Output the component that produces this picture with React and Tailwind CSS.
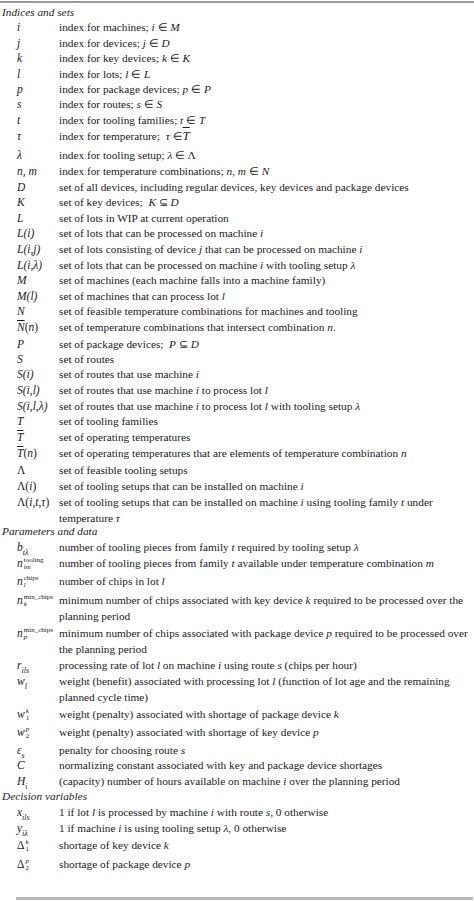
import React from "react";

const Sc = ({ sub, sup }) => (
  <span className="inline-flex flex-col align-[5px] text-[7px] leading-[7px] ml-[1px] not-italic">
    <span className="not-italic">{sup || "\u00a0"}</span>
    <span className="italic">{sub || "\u00a0"}</span>
  </span>
);

const Sub = ({ children }) => (
  <sub className="text-[8px] italic align-[-2px] leading-none">{children}</sub>
);

const Ob = ({ children }) => <span className="overline">{children}</span>;

const rows = [
  { head: "Indices and sets", h: "h-[15px]" },
  { s: <i>i</i>, d: <>index for machines; <i>i</i> ∈ <i>M</i></>, h: "h-[16px]" },
  { s: <i>j</i>, d: <>index for devices; <i>j</i> ∈ <i>D</i></>, h: "h-[15px]" },
  { s: <i>k</i>, d: <>index for key devices; <i>k</i> ∈ <i>K</i></>, h: "h-[16px]" },
  { s: <i>l</i>, d: <>index for lots; <i>l</i> ∈ <i>L</i></>, h: "h-[15px]" },
  { s: <i>p</i>, d: <>index for package devices; <i>p</i> ∈ <i>P</i></>, h: "h-[15px]" },
  { s: <i>s</i>, d: <>index for routes; <i>s</i> ∈ <i>S</i></>, h: "h-[16px]" },
  { s: <i>t</i>, d: <>index for tooling families; <i>t</i> ∈ <i>T</i></>, h: "h-[16px]" },
  { s: <i>τ</i>, d: <>index for temperature;&nbsp; <i>τ</i> ∈<i className="text-[13px]"><Ob>T</Ob></i></>, h: "h-[19px]" },
  { s: <i>λ</i>, d: <>index for tooling setup; <i>λ</i> ∈ Λ</>, h: "h-[16px]" },
  { s: <i>n, m</i>, d: <>index for temperature combinations; <i>n</i>, <i>m</i> ∈ <i>N</i></>, h: "h-[16px]" },
  { s: <i>D</i>, d: <>set of all devices, including regular devices, key devices and package devices</>, h: "h-[15px]" },
  { s: <i>K</i>, d: <>set of key devices;&nbsp; <i>K</i> ⊆ <i>D</i></>, h: "h-[16px]" },
  { s: <i>L</i>, d: <>set of lots in WIP at current operation</>, h: "h-[15px]" },
  { s: <i>L(i)</i>, d: <>set of lots that can be processed on machine <i>i</i></>, h: "h-[16px]" },
  { s: <i>L(i,j)</i>, d: <>set of lots consisting of device <i>j</i> that can be processed on machine <i>i</i></>, h: "h-[16px]" },
  { s: <i>L(i,λ)</i>, d: <>set of lots that can be processed on machine <i>i</i> with tooling setup <i>λ</i></>, h: "h-[15px]" },
  { s: <i>M</i>, d: <>set of machines (each machine falls into a machine family)</>, h: "h-[16px]" },
  { s: <i>M(l)</i>, d: <>set of machines that can process lot <i>l</i></>, h: "h-[15px]" },
  { s: <i>N</i>, d: <>set of feasible temperature combinations for machines and tooling</>, h: "h-[16px]" },
  { s: <><i><Ob>N</Ob></i>(<i>n</i>)</>, d: <>set of temperature combinations that intersect combination <i>n</i>.</>, h: "h-[17px]" },
  { s: <i>P</i>, d: <>set of package devices;&nbsp; <i>P</i> ⊆ <i>D</i></>, h: "h-[15px]" },
  { s: <i>S</i>, d: <>set of routes</>, h: "h-[15px]" },
  { s: <i>S(i)</i>, d: <>set of routes that use machine <i>i</i></>, h: "h-[16px]" },
  { s: <i>S(i,l)</i>, d: <>set of routes that use machine <i>i</i> to process lot <i>l</i></>, h: "h-[16px]" },
  { s: <i>S(i,l,λ)</i>, d: <>set of routes that use machine <i>i</i> to process lot <i>l</i> with tooling setup <i>λ</i></>, h: "h-[15px]" },
  { s: <i>T</i>, d: <>set of tooling families</>, h: "h-[16px]" },
  { s: <i><Ob>T</Ob></i>, d: <>set of operating temperatures</>, h: "h-[16px]" },
  { s: <><i><Ob>T</Ob></i>(<i>n</i>)</>, d: <>set of operating temperatures that are elements of temperature combination <i>n</i></>, h: "h-[17px]" },
  { s: <>Λ</>, d: <>set of feasible tooling setups</>, h: "h-[16px]" },
  { s: <>Λ(<i>i</i>)</>, d: <>set of tooling setups that can be installed on machine <i>i</i></>, h: "h-[16px]" },
  { s: <>Λ(<i>i</i>,<i>t</i>,<i>τ</i>)</>, d: <>set of tooling setups that can be installed on machine <i>i</i> using tooling family <i>t</i> under<br />temperature <i>τ</i></>, h: "h-[29px]" },
  { head: "Parameters and data", h: "h-[16px]" },
  { s: <><i>b</i><Sub>tλ</Sub></>, d: <>number of tooling pieces from family <i>t</i> required by tooling setup <i>λ</i></>, h: "h-[16px]" },
  { s: <><i>n</i><Sc sup="tooling" sub="tm" /></>, d: <>number of tooling pieces from family <i>t</i> available under temperature combination <i>m</i></>, h: "h-[18px]" },
  { s: <><i>n</i><Sc sup="chips" sub="l" /></>, d: <>number of chips in lot <i>l</i></>, h: "h-[19px]" },
  { s: <><i>n</i><Sc sup="min_chips" sub="k" /></>, d: <>minimum number of chips associated with key device <i>k</i> required to be processed over the<br />planning period</>, h: "h-[33px]" },
  { s: <><i>n</i><Sc sup="min_chips" sub="p" /></>, d: <>minimum number of chips associated with package device <i>p</i> required to be processed over<br />the planning period</>, h: "h-[32px]" },
  { s: <><i>r</i><Sub>ils</Sub></>, d: <>processing rate of lot <i>l</i> on machine <i>i</i> using route <i>s</i> (chips per hour)</>, h: "h-[16px]" },
  { s: <><i>w</i><Sub>l</Sub></>, d: <>weight (benefit) associated with processing lot <i>l</i> (function of lot age and the remaining<br />planned cycle time)</>, h: "h-[33px]" },
  { s: <><i>w</i><Sc sup={<i>k</i>} sub={<span className="not-italic">1</span>} /></>, d: <>weight (penalty) associated with shortage of package device <i>k</i></>, h: "h-[18px]" },
  { s: <><i>w</i><Sc sup={<i>p</i>} sub={<span className="not-italic">2</span>} /></>, d: <>weight (penalty) associated with shortage of key device <i>p</i></>, h: "h-[18px]" },
  { s: <><i>ε</i><Sub>s</Sub></>, d: <>penalty for choosing route <i>s</i></>, h: "h-[15px]" },
  { s: <i>C</i>, d: <>normalizing constant associated with key and package device shortages</>, h: "h-[16px]" },
  { s: <><i>H</i><Sub>i</Sub></>, d: <>(capacity) number of hours available on machine <i>i</i> over the planning period</>, h: "h-[15px]" },
  { head: "Decision variables", h: "h-[16px]" },
  { s: <><i>x</i><Sub>ils</Sub></>, d: <>1 if lot <i>l</i> is processed by machine <i>i</i> with route <i>s</i>, 0 otherwise</>, h: "h-[16px]" },
  { s: <><i>y</i><Sub>iλ</Sub></>, d: <>1 if machine <i>i</i> is using tooling setup <i>λ</i>, 0 otherwise</>, h: "h-[17px]" },
  { s: <>Δ<Sc sup={<i>k</i>} sub={<span className="not-italic">1</span>} /></>, d: <>shortage of key device <i>k</i></>, h: "h-[19px]" },
  { s: <>Δ<Sc sup={<i>p</i>} sub={<span className="not-italic">2</span>} /></>, d: <>shortage of package device <i>p</i></>, h: "h-[41px]" },
];

export default function App() {
  return (
    <div className="w-[474px] h-[901px] bg-white text-[#1c1c1c] font-['Liberation_Serif',serif] text-[11.3px] leading-[16px] overflow-hidden">
      <div className="mt-[1px] h-[2px] bg-[#9c9c9c]" />
      <div className="pt-[1px]">
        {rows.map((r, idx) =>
          r.head ? (
            <div key={idx} className={"pl-[2px] italic " + r.h}>
              {r.head}
            </div>
          ) : (
            <div key={idx} className={"flex " + r.h}>
              <div className="w-[42px] ml-[17px] shrink-0 text-[11.5px] whitespace-nowrap">{r.s}</div>
              <div className="flex-1 whitespace-nowrap">{r.d}</div>
            </div>
          )
        )}
      </div>
      <div className="ml-[16px] mr-[1px] h-[3px] bg-[#b9b9b9]" />
    </div>
  );
}
